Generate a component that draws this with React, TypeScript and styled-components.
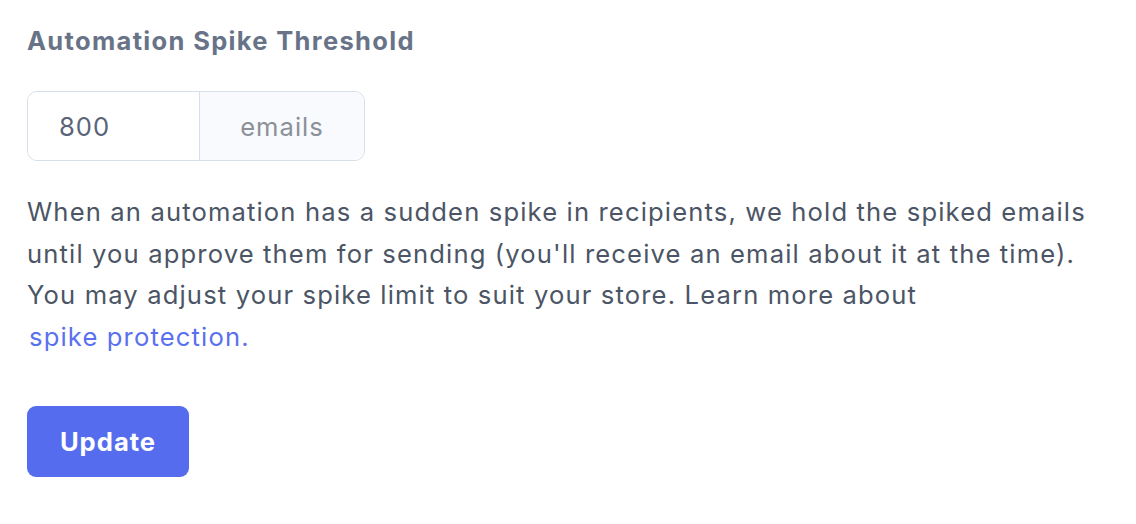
import React from "react";
import styled, { createGlobalStyle } from "styled-components";

const GlobalStyle = createGlobalStyle`
  html, body {
    margin: 0;
    padding: 0;
    background: #ffffff;
  }
  body {
    font-family: Inter, "Noto Sans", "Liberation Sans", sans-serif;
    -webkit-font-smoothing: antialiased;
  }
`;

const Section = styled.section`
  padding: 25px 27px;
  width: 1090px;
`;

const Title = styled.h3`
  margin: 0;
  font-size: 25.5px;
  line-height: 32px;
  font-weight: 700;
  letter-spacing: 1.33px;
  color: #687388;
`;

const InputGroup = styled.div`
  display: flex;
  width: 338px;
  height: 70px;
  margin-top: 34px;
  border: 1.5px solid #d6e0ea;
  border-radius: 10px;
  overflow: hidden;
  box-sizing: border-box;
`;

const NumberInput = styled.input`
  width: 171px;
  border: none;
  outline: none;
  padding: 0 0 0 31px;
  box-sizing: border-box;
  font-family: inherit;
  font-size: 25.6px;
  letter-spacing: 1px;
  color: #5a6479;
  background: #ffffff;
`;

const Addon = styled.div`
  flex: 1;
  display: flex;
  align-items: center;
  justify-content: center;
  border-left: 1.5px solid #d6e0ea;
  background: #f8fafd;
  font-size: 25.6px;
  letter-spacing: 1px;
  color: #8b9099;
`;

const Description = styled.p`
  margin: 30px 0 0;
  font-size: 25.6px;
  line-height: 41.6px;
  letter-spacing: 1.14px;
  color: #4b5565;
`;

const Link = styled.a`
  display: inline-block;
  padding-left: 2px;
  color: #5b70f0;
  text-decoration: none;
`;

const Button = styled.button`
  margin-top: 49px;
  width: 162px;
  height: 71px;
  border: none;
  border-radius: 9px;
  background: #546ced;
  color: #ffffff;
  font-family: inherit;
  font-size: 25.6px;
  font-weight: 700;
  letter-spacing: 1px;
  cursor: pointer;
`;

export default function App() {
  return (
    <>
      <GlobalStyle />
      <Section>
        <Title>Automation Spike Threshold</Title>
        <InputGroup>
          <NumberInput type="text" defaultValue="800" />
          <Addon>emails</Addon>
        </InputGroup>
        <Description>
          When an automation has a sudden spike in recipients, we hold the spiked emails
          until you approve them for sending (you'll receive an email about it at the time).
          You may adjust your spike limit to suit your store. Learn more about{" "}
          <Link href="#">spike protection.</Link>
        </Description>
        <Button>Update</Button>
      </Section>
    </>
  );
}
